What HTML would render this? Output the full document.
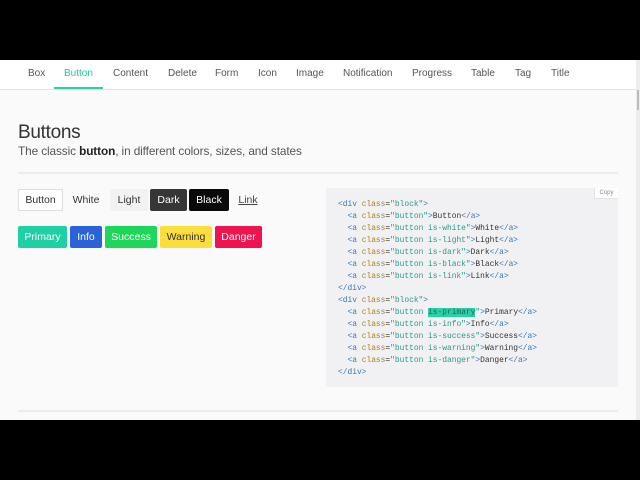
<!DOCTYPE html>
<html><head><meta charset="utf-8"><style>
*{margin:0;padding:0;box-sizing:border-box}
body{width:640px;height:480px;background:#000;position:relative;overflow:hidden;font-family:"Liberation Sans",sans-serif}
#pg{position:absolute;left:0;top:60px;width:640px;height:360px;background:#fafafa;overflow:hidden}
.nav{position:absolute;top:0;left:0;width:636px;height:30px;background:#fff;border-bottom:1px solid #e4e4e4}
.nav span{position:absolute;top:8px;font-size:10px;color:#555}
.nav .act{color:#1fc8a0}
.ul{position:absolute;left:54px;top:27px;width:49px;height:2px;background:#2bd1a6}
.sb{position:absolute;right:0;top:0;width:4px;height:360px;background:#ececec}
.sb i{position:absolute;left:1px;top:30px;width:2px;height:20px;background:#bbb}
h1{position:absolute;left:18px;top:62px;font-size:19px;font-weight:normal;color:#333;letter-spacing:-0.3px}
.sub{position:absolute;left:18px;top:84px;font-size:11.8px;color:#555;letter-spacing:-0.1px}
.sub b{color:#222;font-weight:bold}
.hr{position:absolute;left:18px;width:600px;height:2px;background:#ececec}
.b{position:absolute;height:22px;font-size:10.5px;display:flex;align-items:center;justify-content:center;border-radius:2px;color:#fff}
pre{position:absolute;left:326px;top:128px;width:292px;height:199px;background:#f1f0f2;font-family:"Liberation Mono",monospace;font-size:7.9px;line-height:12px;padding:11px 12px;color:#333}
.t{color:#3a78b8}.a{color:#a88520}.s{color:#2a9a8a}
.hl{background:#2bd1a6;color:#1a6a5a}
.copy{position:absolute;left:594px;top:128px;width:24px;height:11px;background:#fff;border-left:1px solid #e4e4e4;border-bottom:1px solid #e4e4e4;font-size:6px;color:#888;text-align:center;line-height:11px}
</style></head><body>
<div id="pg">
<div class="nav">
<span style="left:28px">Box</span><span class="act" style="left:64px">Button</span><span style="left:113px">Content</span><span style="left:168px">Delete</span><span style="left:215px">Form</span><span style="left:258px">Icon</span><span style="left:296px">Image</span><span style="left:343px">Notification</span><span style="left:412px">Progress</span><span style="left:471px">Table</span><span style="left:515px">Tag</span><span style="left:551px">Title</span>
<div class="ul"></div>
</div>
<div class="sb"><i></i></div>
<h1>Buttons</h1>
<div class="sub">The classic <b>button</b>, in different colors, sizes, and states</div>
<div class="hr" style="top:112px"></div>
<div class="b" style="left:18px;top:129px;width:45px;background:#fff;border:1px solid #ddd;color:#333">Button</div>
<div class="b" style="left:66px;top:129px;width:40px;color:#333">White</div>
<div class="b" style="left:110px;top:129px;width:38px;background:#f2f2f2;color:#333">Light</div>
<div class="b" style="left:150px;top:129px;width:37px;background:#363636">Dark</div>
<div class="b" style="left:189px;top:129px;width:40px;background:#0a0a0a">Black</div>
<div class="b" style="left:235px;top:129px;width:26px;color:#444;text-decoration:underline">Link</div>
<div class="b" style="left:18px;top:166px;width:49px;background:#1fd0a4">Primary</div>
<div class="b" style="left:70px;top:166px;width:32px;background:#2a62d8">Info</div>
<div class="b" style="left:105px;top:166px;width:52px;background:#1ed65a">Success</div>
<div class="b" style="left:160px;top:166px;width:52px;background:#fbdd3c;color:#333">Warning</div>
<div class="b" style="left:215px;top:166px;width:47px;background:#f0144e">Danger</div>
<pre><span class="t">&lt;div</span> <span class="a">class</span>=<span class="s">"block"</span><span class="t">&gt;</span>
  <span class="t">&lt;a</span> <span class="a">class</span>=<span class="s">"button"</span><span class="t">&gt;</span>Button<span class="t">&lt;/a&gt;</span>
  <span class="t">&lt;a</span> <span class="a">class</span>=<span class="s">"button is-white"</span><span class="t">&gt;</span>White<span class="t">&lt;/a&gt;</span>
  <span class="t">&lt;a</span> <span class="a">class</span>=<span class="s">"button is-light"</span><span class="t">&gt;</span>Light<span class="t">&lt;/a&gt;</span>
  <span class="t">&lt;a</span> <span class="a">class</span>=<span class="s">"button is-dark"</span><span class="t">&gt;</span>Dark<span class="t">&lt;/a&gt;</span>
  <span class="t">&lt;a</span> <span class="a">class</span>=<span class="s">"button is-black"</span><span class="t">&gt;</span>Black<span class="t">&lt;/a&gt;</span>
  <span class="t">&lt;a</span> <span class="a">class</span>=<span class="s">"button is-link"</span><span class="t">&gt;</span>Link<span class="t">&lt;/a&gt;</span>
<span class="t">&lt;/div&gt;</span>
<span class="t">&lt;div</span> <span class="a">class</span>=<span class="s">"block"</span><span class="t">&gt;</span>
  <span class="t">&lt;a</span> <span class="a">class</span>=<span class="s">"button <span class="hl">is-primary</span>"</span><span class="t">&gt;</span>Primary<span class="t">&lt;/a&gt;</span>
  <span class="t">&lt;a</span> <span class="a">class</span>=<span class="s">"button is-info"</span><span class="t">&gt;</span>Info<span class="t">&lt;/a&gt;</span>
  <span class="t">&lt;a</span> <span class="a">class</span>=<span class="s">"button is-success"</span><span class="t">&gt;</span>Success<span class="t">&lt;/a&gt;</span>
  <span class="t">&lt;a</span> <span class="a">class</span>=<span class="s">"button is-warning"</span><span class="t">&gt;</span>Warning<span class="t">&lt;/a&gt;</span>
  <span class="t">&lt;a</span> <span class="a">class</span>=<span class="s">"button is-danger"</span><span class="t">&gt;</span>Danger<span class="t">&lt;/a&gt;</span>
<span class="t">&lt;/div&gt;</span></pre>
<div class="copy">Copy</div>
<div class="hr" style="top:350px"></div>
</div>
</body></html>
